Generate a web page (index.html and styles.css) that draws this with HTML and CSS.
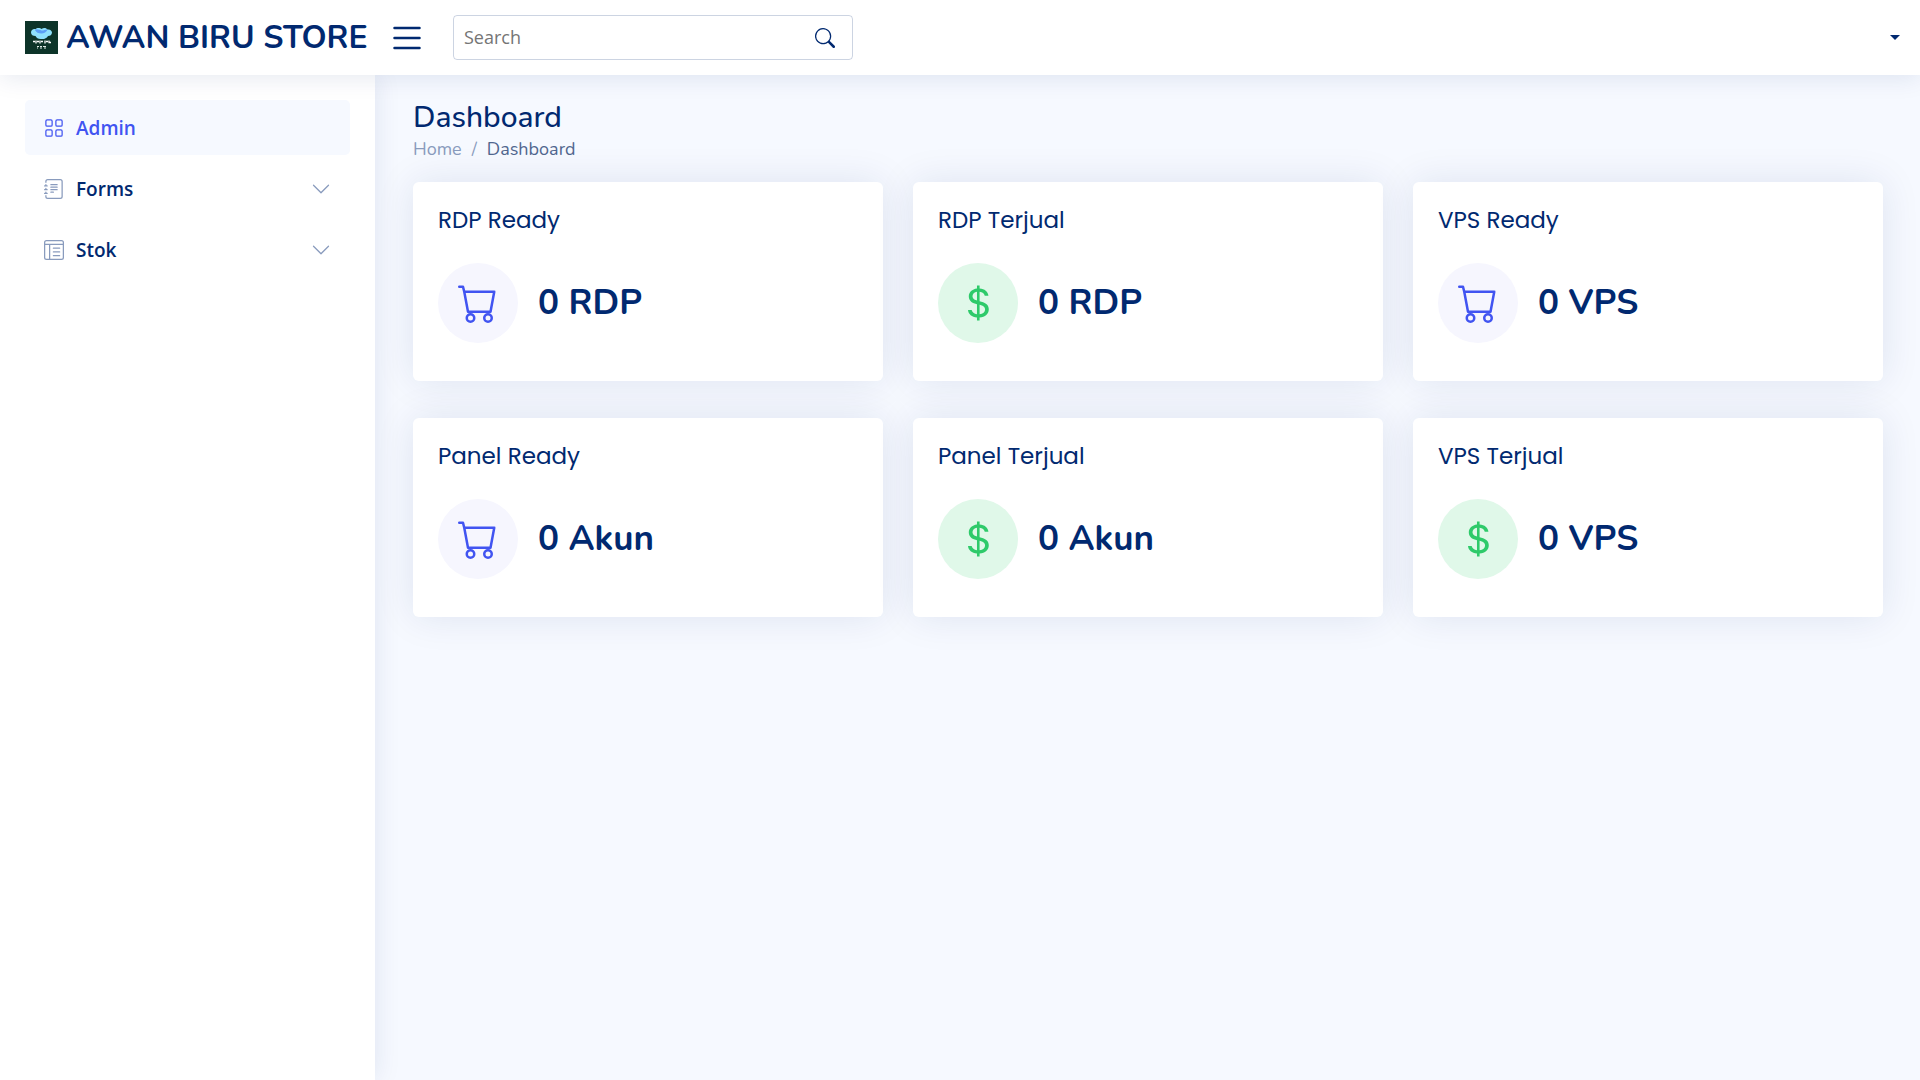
FILE: index.html
```html
<!DOCTYPE html>
<html lang="id">
<head>
<meta charset="utf-8">
<meta name="viewport" content="width=device-width, initial-scale=1">
<title>Dashboard - AWAN BIRU STORE</title>
<link rel="stylesheet" href="styles.css">
</head>
<body>
<svg class="sprite" aria-hidden="true">
  <symbol id="cart" viewBox="0 0 16 16"><path d="M0 1.5A.5.5 0 0 1 .5 1H2a.5.5 0 0 1 .485.379L2.89 3H14.5a.5.5 0 0 1 .491.592l-1.5 8A.5.5 0 0 1 13 12H4a.5.5 0 0 1-.491-.408L2.01 3.607 1.61 2H.5a.5.5 0 0 1-.5-.5zM3.102 4l1.313 7h8.17l1.313-7H3.102zM5 12a2 2 0 1 0 0 4 2 2 0 0 0 0-4zm7 0a2 2 0 1 0 0 4 2 2 0 0 0 0-4zm-7 1a1 1 0 1 1 0 2 1 1 0 0 1 0-2zm7 0a1 1 0 1 1 0 2 1 1 0 0 1 0-2z"/></symbol>
  <symbol id="dollar" viewBox="0 0 16 16"><path d="M4 10.781c.148 1.667 1.513 2.85 3.591 3.003V15h1.043v-1.216c2.27-.179 3.678-1.438 3.678-3.3 0-1.59-.947-2.51-2.956-3.028l-.722-.187V3.467c1.122.11 1.879.714 2.07 1.616h1.47c-.166-1.6-1.54-2.748-3.54-2.875V1H7.591v1.233c-1.939.23-3.27 1.472-3.27 3.156 0 1.454.966 2.483 2.661 2.917l.61.162v4.031c-1.149-.17-1.94-.8-2.131-1.718H4zm3.391-3.836c-1.043-.263-1.6-.825-1.6-1.616 0-.944.704-1.641 1.8-1.828v3.495l-.2-.05zm1.591 1.872c1.287.323 1.852.859 1.852 1.769 0 1.097-.826 1.828-2.2 1.939V8.73l.348.086z"/></symbol>
  <symbol id="chevron" viewBox="0 0 16 16"><path d="M1.646 4.646a.5.5 0 0 1 .708 0L8 10.293l5.646-5.647a.5.5 0 0 1 .708.708l-6 6a.5.5 0 0 1-.708 0l-6-6a.5.5 0 0 1 0-.708z"/></symbol>
</svg>

<header class="header">
  <a class="logo" href="#">
    <svg class="logo-mark" viewBox="0 0 33 33" aria-hidden="true">
      <rect width="33" height="33" fill="#0d3429"/>
      <path d="M6 11.500c0-2.500 2.500-4 4.500-3.200C11.500 6.500 15 6.500 16.500 8c2-1.700 5-1.200 6 .5 2.500-.5 4.500 1 4.500 3 0 2.500-2 3.500-4 3.500-1.500 2.500-4 3.300-6.500 3-3 .3-5-1-6-3C8 15 6 14 6 11.500z" fill="#8fe0fc"/>
      <path d="M10 9c2-1.500 4 0 6.500.5 3 0 4-1.500 6-1-1 2.500-3.500 4-6 4-3 0-5.500-1-6.500-3.500z" fill="#5b9ef5"/>
      <path d="M8 20.500h2m1-1v3m1-2h2m1-1v3m1-2h2m2-1v3m1-2h2m1-1v2h2" stroke="#fff" stroke-width="1.300" fill="none"/>
      <path d="M12 25.500h2m1 0h2m1 0h3M12 27h1m2 0h2m2 0h2" stroke="#dfe9e5" fill="none"/>
    </svg>
    <span>AWAN BIRU STORE</span>
  </a>
  <button class="toggle" type="button" aria-label="Toggle sidebar">
    <svg viewBox="0 0 16 16"><path d="M2.5 12a.5.5 0 0 1 .5-.5h10a.5.5 0 0 1 0 1H3a.5.5 0 0 1-.5-.5zm0-4a.5.5 0 0 1 .5-.5h10a.5.5 0 0 1 0 1H3a.5.5 0 0 1-.5-.5zm0-4a.5.5 0 0 1 .5-.5h10a.5.5 0 0 1 0 1H3a.5.5 0 0 1-.5-.5z"/></svg>
  </button>
  <form class="search" role="search">
    <input type="text" placeholder="Search" aria-label="Search">
    <button type="submit" aria-label="Search">
      <svg viewBox="0 0 16 16"><path d="M11.742 10.344a6.500 6.500 0 1 0-1.397 1.398h-.001c.03.04.062.078.098.115l3.850 3.850a1 1 0 0 0 1.415-1.414l-3.850-3.850a1.007 1.007 0 0 0-.115-.1zM12 6.500a5.500 5.500 0 1 1-11 0 5.500 5.500 0 0 1 11 0z"/></svg>
    </button>
  </form>
  <button class="profile" type="button" aria-label="Profile"></button>
</header>

<div class="page">
  <nav class="sidebar" aria-label="Main">
    <a class="nav-link active" href="#">
      <svg viewBox="0 0 16 16"><path d="M1 2.500A1.500 1.500 0 0 1 2.500 1h3A1.500 1.500 0 0 1 7 2.500v3A1.500 1.500 0 0 1 5.500 7h-3A1.500 1.500 0 0 1 1 5.500v-3zM2.500 2a.5.5 0 0 0-.5.5v3a.5.5 0 0 0 .5.5h3a.5.5 0 0 0 .5-.5v-3a.5.5 0 0 0-.5-.5h-3zm6.500.5A1.500 1.500 0 0 1 10.500 1h3A1.500 1.500 0 0 1 15 2.500v3A1.500 1.500 0 0 1 13.500 7h-3A1.500 1.500 0 0 1 9 5.500v-3zm1.500-.5a.5.5 0 0 0-.5.5v3a.5.5 0 0 0 .5.5h3a.5.5 0 0 0 .5-.5v-3a.5.5 0 0 0-.5-.5h-3zM1 10.500A1.500 1.500 0 0 1 2.500 9h3A1.500 1.500 0 0 1 7 10.500v3A1.500 1.500 0 0 1 5.500 15h-3A1.500 1.500 0 0 1 1 13.500v-3zm1.500-.5a.5.5 0 0 0-.5.5v3a.5.5 0 0 0 .5.5h3a.5.5 0 0 0 .5-.5v-3a.5.5 0 0 0-.5-.5h-3zm6.500.5A1.500 1.500 0 0 1 10.500 9h3a1.500 1.500 0 0 1 1.500 1.500v3a1.500 1.500 0 0 1-1.500 1.500h-3A1.500 1.500 0 0 1 9 13.500v-3zm1.500-.5a.5.5 0 0 0-.5.5v3a.5.5 0 0 0 .5.5h3a.5.5 0 0 0 .5-.5v-3a.5.5 0 0 0-.5-.5h-3z"/></svg>
      <span>Admin</span>
    </a>
    <a class="nav-link" href="#">
      <svg viewBox="0 0 16 16"><path d="M5 10.500a.5.5 0 0 1 .5-.5h2a.5.5 0 0 1 0 1h-2a.5.5 0 0 1-.5-.5zm0-2a.5.5 0 0 1 .5-.5h5a.5.5 0 0 1 0 1h-5a.5.5 0 0 1-.5-.5zm0-2a.5.5 0 0 1 .5-.5h5a.5.5 0 0 1 0 1h-5a.5.5 0 0 1-.5-.5zm0-2a.5.5 0 0 1 .5-.5h5a.5.5 0 0 1 0 1h-5a.5.5 0 0 1-.5-.5z"/><path d="M3 0h10a2 2 0 0 1 2 2v12a2 2 0 0 1-2 2H3a2 2 0 0 1-2-2v-1h1v1a1 1 0 0 0 1 1h10a1 1 0 0 0 1-1V2a1 1 0 0 0-1-1H3a1 1 0 0 0-1 1v1H1V2a2 2 0 0 1 2-2z"/><path d="M1 5v-.5a.5.5 0 0 1 1 0V5h.5a.5.5 0 0 1 0 1h-2a.5.5 0 0 1 0-1H1zm0 3v-.5a.5.5 0 0 1 1 0V8h.5a.5.5 0 0 1 0 1h-2a.5.5 0 0 1 0-1H1zm0 3v-.5a.5.5 0 0 1 1 0v.5h.5a.5.5 0 0 1 0 1h-2a.5.5 0 0 1 0-1H1z"/></svg>
      <span>Forms</span>
      <svg class="chevron"><use href="#chevron"/></svg>
    </a>
    <a class="nav-link" href="#">
      <svg viewBox="0 0 16 16"><path d="M13 6.500a.5.5 0 0 0-.5-.5h-5a.5.5 0 0 0 0 1h5a.5.5 0 0 0 .5-.5zm0 3a.5.5 0 0 0-.5-.5h-5a.5.5 0 0 0 0 1h5a.5.5 0 0 0 .5-.5zm-.5 2.500a.5.5 0 0 1 0 1h-5a.5.5 0 0 1 0-1h5z"/><path d="M14 0a2 2 0 0 1 2 2v12a2 2 0 0 1-2 2H2a2 2 0 0 1-2-2V2a2 2 0 0 1 2-2h12zM2 1a1 1 0 0 0-1 1v1h14V2a1 1 0 0 0-1-1H2zM1 4v10a1 1 0 0 0 1 1h2V4H1zm4 0v11h9a1 1 0 0 0 1-1V4H5z"/></svg>
      <span>Stok</span>
      <svg class="chevron"><use href="#chevron"/></svg>
    </a>
  </nav>

  <main class="main">
    <h1>Dashboard</h1>
    <nav class="breadcrumb" aria-label="Breadcrumb">
      <a href="#">Home</a><span class="sep">/</span><span class="current">Dashboard</span>
    </nav>
    <section class="cards">
      <article class="card">
        <h2>RDP Ready</h2>
        <div class="stat"><div class="badge"><svg><use href="#cart"/></svg></div><strong>0 RDP</strong></div>
      </article>
      <article class="card">
        <h2>RDP Terjual</h2>
        <div class="stat"><div class="badge green"><svg><use href="#dollar"/></svg></div><strong>0 RDP</strong></div>
      </article>
      <article class="card">
        <h2>VPS Ready</h2>
        <div class="stat"><div class="badge"><svg><use href="#cart"/></svg></div><strong>0 VPS</strong></div>
      </article>
      <article class="card">
        <h2>Panel Ready</h2>
        <div class="stat"><div class="badge"><svg><use href="#cart"/></svg></div><strong>0 Akun</strong></div>
      </article>
      <article class="card">
        <h2>Panel Terjual</h2>
        <div class="stat"><div class="badge green"><svg><use href="#dollar"/></svg></div><strong>0 Akun</strong></div>
      </article>
      <article class="card">
        <h2>VPS Terjual</h2>
        <div class="stat"><div class="badge green"><svg><use href="#dollar"/></svg></div><strong>0 VPS</strong></div>
      </article>
    </section>
  </main>
</div>
</body>
</html>
```
FILE: styles.css
```css
* { box-sizing: border-box; }

:root {
  --navy: #012970;
  --blue: #4154f1;
  --muted: #899bbd;
  --heading: Nunito, Lato, sans-serif;
  --title: Poppins, Inter, sans-serif;
  --body: "Open Sans", sans-serif;
}

body {
  margin: 0;
  min-height: 100vh;
  display: flex;
  flex-direction: column;
  background: #f6f9ff;
  color: #444;
  font: 20px/30px var(--body);
}

a { text-decoration: none; }
button { border: 0; padding: 0; background: none; cursor: pointer; }
svg { display: block; fill: currentColor; }
.sprite { display: none; }

.header {
  position: relative;
  z-index: 2;
  display: flex;
  align-items: center;
  height: 75px;
  padding: 0 20px 0 25px;
  background: #fff;
  box-shadow: 0 3px 25px rgba(1, 41, 112, .1);
}
.logo {
  display: flex;
  align-items: center;
  gap: 8px;
  width: 350px;
  color: var(--navy);
  font: 700 32px/40px var(--heading);
  white-space: nowrap;
}
.logo-mark { width: 33px; height: 33px; flex: none; }
.toggle { margin-left: 12px; color: var(--navy); }
.toggle svg { width: 40px; height: 40px; }

.search {
  display: flex;
  align-items: center;
  width: 400px;
  height: 45px;
  margin-left: 26px;
  padding: 0 17px 0 10px;
  border: 1px solid rgba(1, 41, 112, .2);
  border-radius: 4px;
}
.search input {
  flex: 1;
  min-width: 0;
  padding: 0;
  border: 0;
  outline: 0;
  background: none;
  color: var(--navy);
  font: 18px/27px var(--body);
}
.search input::placeholder { color: #757575; }
.search button { color: var(--navy); }
.search svg { width: 20px; height: 20px; }

.profile {
  margin-left: auto;
  border: solid transparent;
  border-width: 5px 5px 0;
  border-top-color: var(--navy);
}

.page { flex: 1; display: flex; }

.sidebar {
  display: flex;
  flex-direction: column;
  gap: 6px;
  flex: 0 0 375px;
  padding: 25px;
  background: #fff;
  box-shadow: 0 0 25px rgba(1, 41, 112, .1);
}
.nav-link {
  display: flex;
  align-items: center;
  height: 55px;
  padding: 0 19px;
  border-radius: 5px;
  color: var(--navy);
  font: 600 19px/28px var(--body);
}
.nav-link svg { width: 20px; height: 20px; margin-right: 12px; color: var(--muted); }
.nav-link .chevron { margin: 0 0 0 auto; }
.nav-link.active { background: #f6f9ff; color: var(--blue); }
.nav-link.active svg { color: var(--blue); }

.main { flex: 1; min-width: 0; padding: 25px 37px 37px 38px; }

h1 {
  margin: 0;
  color: var(--navy);
  font: 500 30px/36px var(--heading);
}
.breadcrumb {
  display: flex;
  gap: 10px;
  margin-bottom: 20px;
  color: var(--muted);
  font: 400 18px/26px var(--heading);
}
.breadcrumb a { color: var(--muted); }
.breadcrumb .current { color: #51678f; }

.cards {
  display: grid;
  grid-template-columns: repeat(3, 1fr);
  gap: 37px 30px;
}
.card {
  padding: 25px 25px 38px;
  border-radius: 6px;
  background: #fff;
  box-shadow: 0 0 38px rgba(1, 41, 112, .1);
}
.card h2 {
  margin: 0 0 29px;
  color: var(--navy);
  font: 400 23px/27px var(--title);
}
.stat { display: flex; align-items: center; gap: 20px; }
.badge {
  display: grid;
  place-items: center;
  width: 80px;
  height: 80px;
  border-radius: 50%;
  background: #f6f6fe;
  color: var(--blue);
}
.badge.green { background: #e0f8e9; color: #2eca6a; }
.badge svg { width: 40px; height: 40px; }
.stat strong { color: var(--navy); font: 700 35px/42px var(--heading); }
```
